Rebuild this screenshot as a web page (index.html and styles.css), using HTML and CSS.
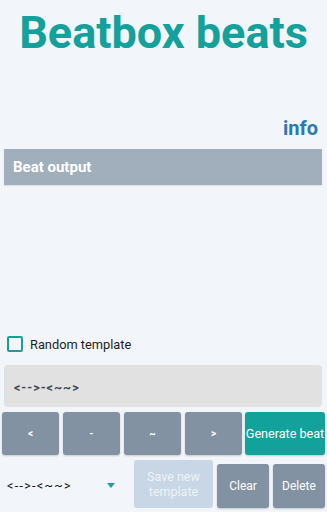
FILE: index.html
```html
<!DOCTYPE html>
<html>
<head>
<meta charset="utf-8">
<link rel="stylesheet" href="styles.css">
</head>
<body>
<div class="app">
  <h1 class="title">Beatbox beats</h1>
  <div class="info-row"><a class="info">info</a></div>
  <div class="output-bar">Beat output</div>
  <div class="spacer"></div>
  <label class="check-row"><span class="checkbox"></span><span class="check-label">Random template</span></label>
  <div class="pattern-box">&lt;--&gt;-&lt;~~&gt;</div>
  <div class="btn-row">
    <button class="btn sym">&lt;</button>
    <button class="btn sym">-</button>
    <button class="btn sym">~</button>
    <button class="btn sym">&gt;</button>
    <button class="btn generate">Generate beat</button>
  </div>
  <div class="bottom-row">
    <div class="select">
      <span class="select-text">&lt;--&gt;-&lt;~~&gt;</span>
      <svg class="caret" width="8" height="5" viewBox="0 0 8 5"><path d="M0 0H8L4 5Z" fill="#14a09b"/></svg>
    </div>
    <button class="btn save">Save new template</button>
    <button class="btn small">Clear</button>
    <button class="btn small">Delete</button>
  </div>
</div>
</body>
</html>
```

FILE: styles.css
```css
html, body {
  margin: 0;
  padding: 0;
  background: #f2f5f9;
}
body {
  font-family: Roboto, "Liberation Sans", sans-serif;
  width: 327px;
  height: 512px;
  overflow: hidden;
}
.app {
  display: flex;
  flex-direction: column;
}
.title {
  margin: 6px 0 0;
  text-align: center;
  font-size: 45px;
  font-weight: 700;
  color: #14a09b;
  line-height: 53px;
  white-space: nowrap;
}
.info-row {
  margin-top: 57px;
  display: flex;
  justify-content: flex-end;
  padding-right: 9px;
  height: 24px;
}
.info {
  font-size: 20px;
  font-weight: 700;
  color: #2a79b5;
  line-height: 24px;
}
.output-bar {
  margin: 9px 5px 0 4px;
  height: 36px;
  background: #a1afbd;
  color: #ffffff;
  font-size: 15px;
  font-weight: 700;
  display: flex;
  align-items: center;
  padding-left: 9px;
  box-shadow: 0 1px 1px rgba(0,0,0,0.08);
}
.spacer {
  height: 151px;
}
.check-row {
  display: flex;
  align-items: center;
  height: 16px;
  padding-left: 7px;
}
.checkbox {
  width: 12px;
  height: 12px;
  border: 2px solid #1a9e98;
  border-radius: 2px;
  flex: none;
}
.check-label {
  margin-left: 7px;
  font-size: 12.8px;
  color: #1f1f1f;
}
.pattern-box {
  margin: 13px 5px 0 4px;
  height: 42px;
  background: #e1e1e1;
  border-radius: 4px;
  display: flex;
  align-items: center;
  padding-left: 10px;
  font-size: 12.5px;
  font-weight: 700;
  letter-spacing: 1px;
  color: #3c4857;
  padding-top: 2px;
  box-sizing: border-box;
}
.btn-row {
  margin-top: 5px;
  display: flex;
  padding-left: 2px;
  gap: 4px;
  height: 43px;
}
.btn {
  border: none;
  margin: 0;
  padding: 0;
  font-family: Roboto, "Liberation Sans", sans-serif;
  color: #ffffff;
  background: #8292a3;
  border-radius: 3px;
  box-shadow: 0 1px 2px rgba(0,0,0,0.18);
  overflow: hidden;
  white-space: nowrap;
}
.sym {
  width: 57px;
  font-size: 10px;
  font-weight: 700;
}
.generate {
  width: 80px;
  margin-left: -1px;
  background: #13a29b;
  font-size: 12.6px;
  display: flex;
  align-items: center;
  justify-content: center;
}
.bottom-row {
  margin-top: 5px;
  display: flex;
  align-items: flex-end;
  height: 48px;
}
.select {
  width: 120px;
  align-self: center;
  display: flex;
  align-items: center;
  padding-left: 7px;
  box-sizing: border-box;
  margin-top: 2px;
}
.select-text {
  font-size: 12.5px;
  letter-spacing: 1.3px;
  color: #111111;
  width: 100px;
}
.caret {
  display: block;
}
.save {
  margin-left: 14px;
  width: 79px;
  height: 48px;
  background: #c8d6e5;
  color: #eef3f8;
  font-size: 12.5px;
  line-height: 15px;
  white-space: normal;
  padding: 0 8px;
  box-shadow: none;
}
.small {
  margin-left: 4px;
  width: 52px;
  height: 44px;
  font-size: 12px;
}
```
